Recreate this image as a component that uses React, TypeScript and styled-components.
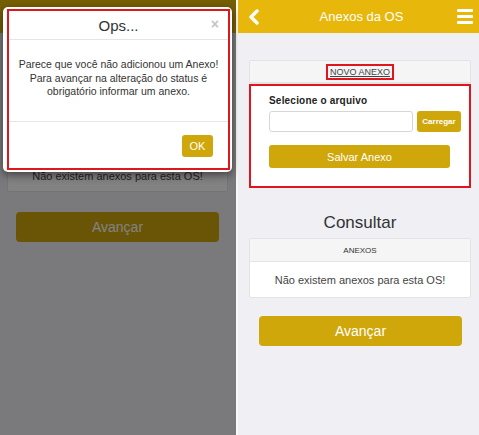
import React from "react";
import styled, { createGlobalStyle } from "styled-components";

const Global = createGlobalStyle`
  html, body { margin: 0; padding: 0; background: #ffffff; }
  body { font-family: "Liberation Sans", Arial, sans-serif; }
  * { box-sizing: border-box; }
`;

const GOLD_HEADER = "#e7b80b";
const GOLD_BTN = "#cfa70b";
const RED = "#e0161f";

const Screen = styled.div`
  width: 479px;
  height: 435px;
  display: flex;
  overflow: hidden;
`;

const Phone = styled.div<{ $w: number }>`
  position: relative;
  width: ${(p) => p.$w}px;
  height: 435px;
  background: #efeff4;
  display: flex;
  flex-direction: column;
  flex-shrink: 0;
`;

const Divider = styled.div`
  width: 2px;
  background: #f8f8f8;
  flex-shrink: 0;
`;

const Header = styled.div`
  height: 33px;
  flex-shrink: 0;
  background: ${GOLD_HEADER};
  display: flex;
  align-items: center;
  justify-content: space-between;
  padding: 0 6px 0 10px;
  color: #fff;
`;

const Title = styled.div`
  font-size: 13px;
  color: #fff;
  padding-left: 6px;
`;

const Burger = styled.div`
  width: 16px;
  display: flex;
  flex-direction: column;
  gap: 3px;
  span {
    display: block;
    height: 3px;
    background: #fff;
    border-radius: 1px;
  }
`;

const Content = styled.div<{ $pl: number; $pr: number; $pt: number }>`
  display: flex;
  flex-direction: column;
  padding: ${(p) => p.$pt}px ${(p) => p.$pr}px 0 ${(p) => p.$pl}px;
`;

const Card = styled.div`
  background: #fff;
  border: 1px solid #e3e3e6;
  border-radius: 2px;
  display: flex;
  flex-direction: column;
`;

const CardHead = styled.div<{ $h?: number }>`
  height: ${(p) => p.$h ?? 23}px;
  background: #f5f5f5;
  border-bottom: 1px solid #e4e4e4;
  display: flex;
  align-items: center;
  justify-content: center;
  font-size: 8px;
  color: #333;
`;

const NovoLabel = styled.span`
  font-size: 9px;
  color: #444;
  text-decoration: underline;
  outline: 2px solid ${RED};
  outline-offset: 0px;
  padding: 1px 2px;
`;

const FormBox = styled.div`
  border: 2px solid ${RED};
  background: #fff;
  padding: 8px 0 18px 18px;
  display: flex;
  flex-direction: column;
`;

const Label = styled.div`
  font-size: 10px;
  font-weight: bold;
  color: #222;
  height: 14px;
  line-height: 14px;
  margin-bottom: 3px;
  letter-spacing: 0.2px;
`;

const FileRow = styled.div`
  display: flex;
  gap: 4px;
  align-items: center;
`;

const FileInput = styled.div`
  width: 144px;
  height: 21px;
  border: 1px solid #d6d6d6;
  border-radius: 3px;
  background: #fff;
`;

const GoldButton = styled.div<{ $w: number; $h: number; $fs: number; $bold?: boolean }>`
  width: ${(p) => p.$w}px;
  height: ${(p) => p.$h}px;
  background: ${GOLD_BTN};
  border-radius: 3px;
  color: #fff;
  font-size: ${(p) => p.$fs}px;
  font-weight: ${(p) => (p.$bold ? "bold" : "normal")};
  display: flex;
  align-items: center;
  justify-content: center;
`;

const SaveRow = styled.div`
  margin-top: 13px;
`;

const Heading = styled.div`
  font-size: 17px;
  color: #333;
  text-align: center;
  margin: 25px 0 5px;
`;

const EmptyText = styled.div<{ $h: number }>`
  height: ${(p) => p.$h}px;
  display: flex;
  align-items: center;
  justify-content: center;
  font-size: 11px;
  color: #444;
`;

const BigButton = styled.div<{ $ml: number; $mt: number }>`
  margin: ${(p) => p.$mt}px 17px 0 ${(p) => p.$ml}px;
  height: 30px;
  background: ${GOLD_BTN};
  border-radius: 4px;
  color: #fff;
  font-size: 14px;
  display: flex;
  align-items: center;
  justify-content: center;
`;

const Backdrop = styled.div`
  position: absolute;
  inset: 0;
  background: rgba(0, 0, 0, 0.49);
`;

const Modal = styled.div`
  position: absolute;
  left: 3px;
  top: 7px;
  width: 229px;
  height: 165px;
  background: #fff;
  border-radius: 5px;
  box-shadow: 0 3px 9px rgba(0, 0, 0, 0.5);
  padding: 2px 2px 2px 4px;
`;

const ModalFrame = styled.div`
  height: 100%;
  border: 2px solid ${RED};
  display: flex;
  flex-direction: column;
`;

const ModalHead = styled.div`
  position: relative;
  height: 29px;
  border-bottom: 1px solid #e5e5e5;
  display: flex;
  align-items: center;
  justify-content: center;
  font-size: 15px;
  color: #333;
`;

const Close = styled.span`
  position: absolute;
  right: 9px;
  top: 5px;
  font-size: 14px;
  color: #c4c4c4;
  font-weight: bold;
`;

const ModalBody = styled.div`
  height: 82px;
  border-bottom: 1px solid #e5e5e5;
  display: flex;
  flex-direction: column;
  align-items: center;
  justify-content: center;
  text-align: center;
  font-size: 10.5px;
  line-height: 13.5px;
  color: #333;
  padding: 0 2px 4px;
  white-space: nowrap;
`;

const ModalFoot = styled.div`
  flex: 1;
  display: flex;
  align-items: center;
  justify-content: flex-end;
  padding-right: 15px;
  padding-top: 2px;
`;

const Chevron = () => (
  <svg width="12" height="16" viewBox="0 0 12 16">
    <polyline points="9,2 3,8 9,14" fill="none" stroke="#fff" strokeWidth="3.4" strokeLinecap="round" strokeLinejoin="round" />
  </svg>
);

const Burg = () => (
  <Burger>
    <span />
    <span />
    <span />
  </Burger>
);

export default function App() {
  return (
    <>
      <Global />
      <Screen>
        <Phone $w={236}>
          <Header />
          <Content $pl={7} $pr={8} $pt={103}>
            <Card>
              <CardHead />
              <EmptyText $h={31}>Não existem anexos para esta OS!</EmptyText>
            </Card>
          </Content>
          <BigButton $ml={16} $mt={20}>Avançar</BigButton>
          <Backdrop />
          <Modal>
            <ModalFrame>
              <ModalHead>
                Ops...
                <Close>×</Close>
              </ModalHead>
              <ModalBody>
                <span>Parece que você não adicionou um Anexo!</span>
                <span>Para avançar na alteração do status é</span>
                <span>obrigatório informar um anexo.</span>
              </ModalBody>
              <ModalFoot>
                <GoldButton $w={31} $h={22} $fs={11}>OK</GoldButton>
              </ModalFoot>
            </ModalFrame>
          </Modal>
        </Phone>
        <Divider />
        <Phone $w={241}>
          <Header>
            <Chevron />
            <Title>Anexos da OS</Title>
            <Burg />
          </Header>
          <Content $pl={11} $pr={8} $pt={27}>
            <Card>
              <CardHead $h={22}>
                <NovoLabel>NOVO ANEXO</NovoLabel>
              </CardHead>
            </Card>
            <FormBox>
              <Label>Selecione o arquivo</Label>
              <FileRow>
                <FileInput />
                <GoldButton $w={44} $h={21} $fs={8} $bold>Carregar</GoldButton>
              </FileRow>
              <SaveRow>
                <GoldButton $w={181} $h={23} $fs={11}>Salvar Anexo</GoldButton>
              </SaveRow>
            </FormBox>
            <Heading>Consultar</Heading>
            <Card>
              <CardHead>ANEXOS</CardHead>
              <EmptyText $h={35}>Não existem anexos para esta OS!</EmptyText>
            </Card>
          </Content>
          <BigButton $ml={21} $mt={18}>Avançar</BigButton>
        </Phone>
      </Screen>
    </>
  );
}
